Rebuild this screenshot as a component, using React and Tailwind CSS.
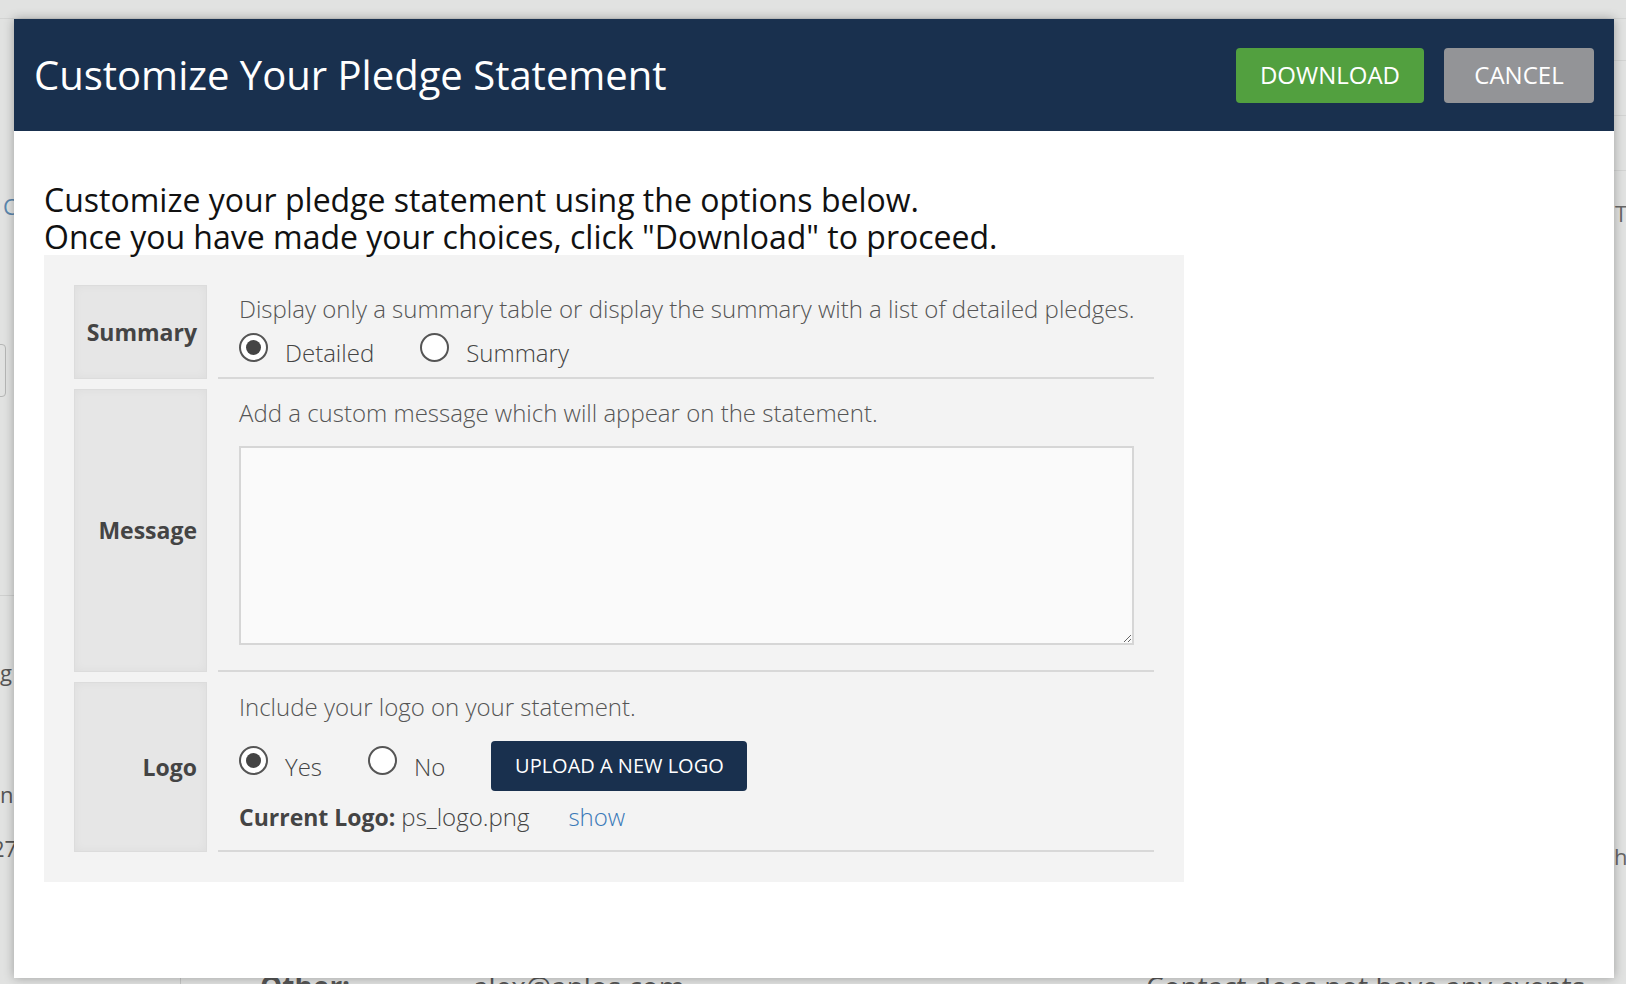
import React, { useState } from 'react';

const Radio = ({ checked, label, onClick, up = 6 }) => (
  <button
    type="button"
    onClick={onClick}
    className="flex items-center gap-[17px] text-[24px] font-light leading-[30px] text-[#444]"
  >
    <span
      className={`flex h-[29px] w-[29px] items-center justify-center rounded-full border-2 border-[#555] bg-white ${
        up === 6 ? 'mb-[6px]' : 'mb-[12px]'
      }`}
    >
      {checked && <span className="h-[15px] w-[15px] rounded-full bg-[#444]" />}
    </span>
    <span className={up === 6 ? 'mt-[6px]' : 'mt-[2px]'}>{label}</span>
  </button>
);

const Label = ({ children }) => (
  <div className="flex w-[133px] shrink-0 items-center justify-end border border-[#dcdcdc] bg-[#e6e6e6] pr-[9px] text-[23px] font-bold text-[#444] shadow-[inset_0_0_10px_rgba(0,0,0,0.04)]">
    {children}
  </div>
);

// faint page that sits behind the modal
const BackgroundPage = () => (
  <div className="flex h-full flex-col">
    <div className="h-[19px] shrink-0 border-b border-[#d3d4d3]" />
    <div className="flex flex-1">
      <div className="flex w-[60px] flex-col">
        <div className="pl-[3px] pt-[172px] text-[22px] leading-[30px] text-[#5b86ad]">C</div>
        <div className="-ml-[30px] mt-[123px] h-[53px] w-[36px] rounded border border-[#b5b6b5]" />
        <div className="mt-[198px] border-t border-[#cfd0cf]" />
        <div className="mt-[62px] text-[22px] leading-[28px] text-[#555]">g</div>
        <div className="mt-[94px] text-[22px] leading-[28px] text-[#555]">n</div>
        <div className="-ml-[8px] mt-[26px] text-[22px] leading-[28px] text-[#555]">27</div>
      </div>
      <div className="flex min-w-0 flex-1 flex-col pt-[950px]">
        <div className="ml-[120px] flex whitespace-nowrap border-l border-[#c5c6c5] pl-[79px] text-[28px] leading-[34px] text-[#555]">
          <span className="w-[213px] shrink-0 font-bold">Other:</span>
          <span className="w-[673px] shrink-0">alex@aplos.com</span>
          <span>Contact does not have any events</span>
        </div>
      </div>
      <div className="flex w-[60px] flex-col">
        <div className="h-[42px] border-b border-[#d3d4d3]" />
        <div className="h-[55px] border-b border-[#d3d4d3]" />
        <div className="h-[55px] border-b border-[#d3d4d3]" />
        <div className="pl-[49px] pt-[28px] text-[22px] leading-[28px] text-[#666]">T</div>
        <div className="mt-[615px] pl-[48px] text-[22px] leading-[28px] text-[#666]">h</div>
      </div>
    </div>
  </div>
);

export default function App() {
  const [detail, setDetail] = useState('detailed');
  const [logo, setLogo] = useState('yes');

  return (
    <div className="relative h-[984px] w-full overflow-hidden bg-[#e1e2e1] font-['Open_Sans',sans-serif]">
      <BackgroundPage />

      {/* Modal */}
      <div className="absolute left-[14px] top-[19px] flex h-[959px] w-[1600px] flex-col bg-white shadow-[0_0_10px_rgba(0,0,0,0.3)]">
        <div className="flex h-[112px] shrink-0 items-center justify-between bg-[#19304e] px-[20px]">
          <h1 className="text-[40px] font-normal text-white">Customize Your Pledge Statement</h1>
          <div className="flex gap-[20px]">
            <button className="h-[55px] w-[188px] rounded-[4px] bg-[#52a03f] text-[24px] text-white">DOWNLOAD</button>
            <button className="h-[55px] w-[150px] rounded-[4px] bg-[#939497] text-[24px] text-white">CANCEL</button>
          </div>
        </div>

        <div className="px-[30px] pt-[50px]">
          <p className="text-[32px] leading-[37px] text-[#111]">
            Customize your pledge statement using the options below.
            <br />
            Once you have made your choices, click "Download" to proceed.
          </p>

          <div className="flex w-[1140px] flex-col gap-[10px] bg-[#f3f3f3] p-[30px]">
            {/* Summary */}
            <div className="flex gap-[11px]">
              <Label>Summary</Label>
              <div className="flex-1 border-b-2 border-[#d8d8d8] pb-[7px] pl-[21px] pr-[20px] pt-[9px]">
                <p className="whitespace-nowrap text-[24px] font-light leading-[30px] text-[#555]">
                  Display only a summary table or display the summary with a list of detailed pledges.
                </p>
                <div className="mt-[6px] flex h-[40px] items-center gap-[46px]">
                  <Radio checked={detail === 'detailed'} label="Detailed" onClick={() => setDetail('detailed')} />
                  <Radio checked={detail === 'summary'} label="Summary" onClick={() => setDetail('summary')} />
                </div>
              </div>
            </div>

            {/* Message */}
            <div className="flex gap-[11px]">
              <Label>Message</Label>
              <div className="flex-1 border-b-2 border-[#d8d8d8] pb-[25px] pl-[21px] pr-[20px] pt-[9px]">
                <p className="text-[24px] font-light leading-[30px] text-[#555]">
                  Add a custom message which will appear on the statement.
                </p>
                <textarea className="mt-[18px] block h-[199px] w-full border-2 border-[#d6d6d6] bg-[#fafafa] p-2 text-[20px] outline-none" />
              </div>
            </div>

            {/* Logo */}
            <div className="flex gap-[11px]">
              <Label>Logo</Label>
              <div className="flex-1 border-b-2 border-[#d8d8d8] pb-[18px] pl-[21px] pr-[20px] pt-[10px]">
                <p className="text-[24px] font-light leading-[30px] text-[#555]">Include your logo on your statement.</p>
                <div className="mt-[19px] flex h-[50px] items-center gap-[46px]">
                  <Radio up={12} checked={logo === 'yes'} label="Yes" onClick={() => setLogo('yes')} />
                  <Radio up={12} checked={logo === 'no'} label="No" onClick={() => setLogo('no')} />
                  <button className="h-[50px] w-[256px] rounded-[4px] bg-[#19304e] text-[20px] text-white">
                    UPLOAD A NEW LOGO
                  </button>
                </div>
                <div className="mt-[11px] flex h-[30px] items-center text-[24px] leading-[30px]">
                  <span className="text-[23px] font-bold text-[#444]">Current Logo:</span>
                  <span className="ml-[6px] font-light text-[#444]">ps_logo.png</span>
                  <a href="#" className="ml-[39px] font-light text-[#3a79b8]">show</a>
                </div>
              </div>
            </div>
          </div>
        </div>
      </div>
    </div>
  );
}
